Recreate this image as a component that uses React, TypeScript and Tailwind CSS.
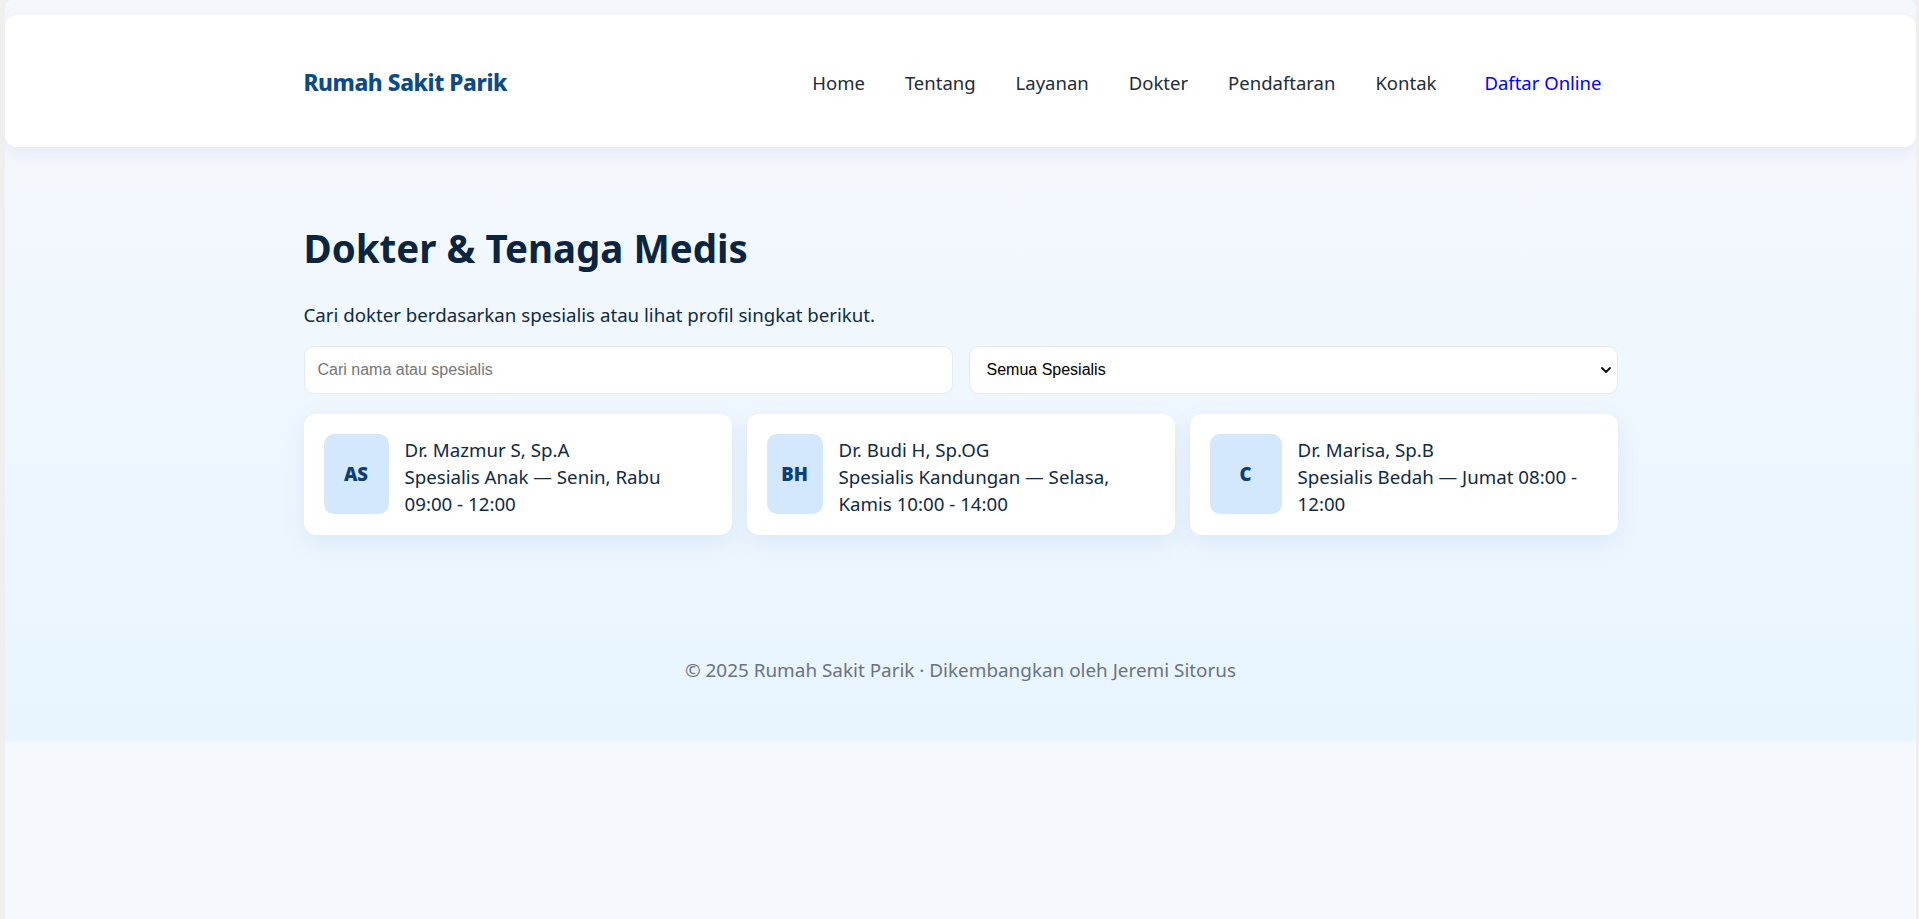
import React from "react";

const navLinks = ["Home", "Tentang", "Layanan", "Dokter", "Pendaftaran", "Kontak"];

const doctors = [
  {
    initials: "AS",
    name: "Dr. Mazmur S, Sp.A",
    lines: ["Spesialis Anak — Senin, Rabu", "09:00 - 12:00"],
    avatar: "w-[65px]",
  },
  {
    initials: "BH",
    name: "Dr. Budi H, Sp.OG",
    lines: ["Spesialis Kandungan — Selasa,", "Kamis 10:00 - 14:00"],
    avatar: "w-[56px]",
  },
  {
    initials: "C",
    name: "Dr. Marisa, Sp.B",
    lines: ["Spesialis Bedah — Jumat 08:00 -", "12:00"],
    avatar: "w-[72px]",
  },
];

function DoctorCard({ d }: { d: (typeof doctors)[number] }) {
  return (
    <div className="flex items-start gap-4 rounded-xl bg-white px-5 pb-[18px] pt-5 shadow-[0_8px_24px_rgba(30,80,150,0.08)]">
      <div
        className={`${d.avatar} flex h-[80px] shrink-0 items-center justify-center rounded-[10px] bg-[#d3e8fd] text-[18.5px] font-black text-[#0c3f73]`}
      >
        {d.initials}
      </div>
      <div className="flex-1 pt-[2px] text-[18.7px] leading-[27px] text-[#0f2a44]">
        <div>{d.name}</div>
        {d.lines.map((l) => (
          <div key={l}>{l}</div>
        ))}
      </div>
    </div>
  );
}

export default function App() {
  return (
    <div className="h-screen bg-[#efefef] pl-[5px] pr-[3px] font-['Noto_Sans',sans-serif]">
      <div className="flex h-full flex-col overflow-hidden rounded-t-[8px] bg-[#f5f9fe]">
        {/* top strip + header */}
        <div className="bg-[#f4f8fd] pt-[15px]">
          <header className="relative z-10 rounded-xl bg-white shadow-[0_6px_18px_rgba(30,70,130,0.08)]">
            <div className="mx-auto flex h-[132px] w-[1314px] items-center justify-between pt-[3px]">
              <div className="text-[22.6px] font-extrabold tracking-[-0.4px] text-[#0d4a86]">
                Rumah Sakit Parik
              </div>
              <nav className="flex items-center gap-10 text-[18.5px] text-[#222b36]">
                {navLinks.map((l) => (
                  <a key={l} href="#">
                    {l}
                  </a>
                ))}
                <a href="#" className="ml-2 pr-4 text-[#0000ff]">
                  Daftar Online
                </a>
              </nav>
            </div>
          </header>
        </div>

        {/* main */}
        <main className="bg-gradient-to-b from-[#f4f8fd] to-[#e8f5ff] pb-[58px] pt-[77px]">
          <div className="mx-auto w-[1314px]">
            <h2 className="text-[38.5px] font-bold leading-[48px] text-[#0b2540]">
              Dokter &amp; Tenaga Medis
            </h2>
            <p className="mt-[29px] text-[18.7px] leading-[27px] text-[#0f2a44]">
              Cari dokter berdasarkan spesialis atau lihat profil singkat berikut.
            </p>

            <div className="mt-[18px] grid grid-cols-2 gap-4">
              <input
                type="text"
                placeholder="Cari nama atau spesialis"
                className="h-[48px] rounded-[10px] border border-[#e2ebf5] bg-white px-[13px] font-['Liberation_Sans',sans-serif] text-[16px] text-black outline-none placeholder:text-[#767676]"
              />
              <div className="relative">
                <select className="h-[48px] w-full appearance-none rounded-[10px] border border-[#e2ebf5] bg-white px-[17px] font-['Liberation_Sans',sans-serif] text-[16px] text-black outline-none">
                  <option>Semua Spesialis</option>
                </select>
                <svg
                  viewBox="0 0 24 24"
                  className="pointer-events-none absolute right-[6px] top-1/2 h-[12px] w-[12px] -translate-y-1/2"
                  fill="none"
                  stroke="#111"
                  strokeWidth="4"
                  strokeLinecap="round"
                  strokeLinejoin="round"
                >
                  <path d="M4 8l8 8 8-8" />
                </svg>
              </div>
            </div>

            <div className="mt-5 grid grid-cols-3 gap-[15px]">
              {doctors.map((d) => (
                <DoctorCard key={d.initials} d={d} />
              ))}
            </div>
          </div>

          <footer className="mt-[122px] text-center text-[18.9px] leading-[27px] text-[#6b7280]">
            © 2025 Rumah Sakit Parik · Dikembangkan oleh Jeremi Sitorus
          </footer>
        </main>

        <div className="flex-1 bg-[#f5f9fe]" />
      </div>
    </div>
  );
}
